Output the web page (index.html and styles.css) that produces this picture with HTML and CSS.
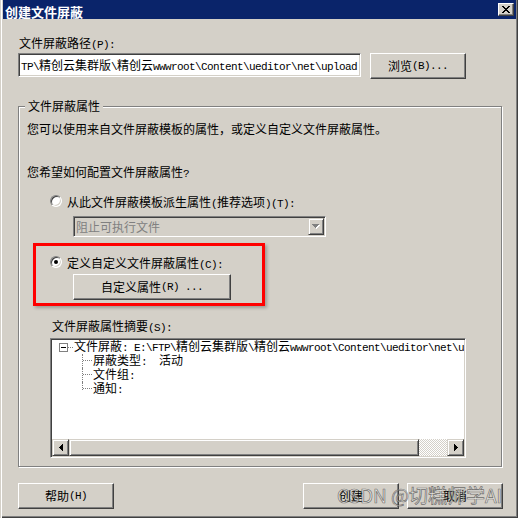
FILE: index.html
```html
<!DOCTYPE html>
<html lang="zh-CN">
<head>
<meta charset="utf-8">
<title>创建文件屏蔽</title>
<link rel="stylesheet" href="styles.css">
</head>
<body>
<div class="window">
  <div class="titlebar">
    <span class="title">创建文件屏蔽</span>
    <span class="close-btn">
      <svg width="8" height="7" viewBox="0 0 8 7" shape-rendering="crispEdges" fill="#000">
        <rect x="0" y="0" width="2" height="1"/><rect x="6" y="0" width="2" height="1"/>
        <rect x="1" y="1" width="2" height="1"/><rect x="5" y="1" width="2" height="1"/>
        <rect x="2" y="2" width="4" height="1"/>
        <rect x="3" y="3" width="2" height="1"/>
        <rect x="2" y="4" width="4" height="1"/>
        <rect x="1" y="5" width="2" height="1"/><rect x="5" y="5" width="2" height="1"/>
        <rect x="0" y="6" width="2" height="1"/><rect x="6" y="6" width="2" height="1"/>
      </svg>
    </span>
  </div>
  <div class="content">
    <div class="line path-label">文件屏蔽路径<span class="m">(P):</span></div>
    <div class="path-row">
      <div class="textbox"><span class="m">TP\</span>精创云集群版<span class="m">\</span>精创云<span class="m">wwwroot\Content\ueditor\net\upload</span></div>
      <div class="btn browse">浏览<span class="m">(B)...</span></div>
    </div>
    <div class="group">
      <span class="legend">文件屏蔽属性</span>
      <p class="line">您可以使用来自文件屏蔽模板的属性，或定义自定义文件屏蔽属性。</p>
      <p class="line question">您希望如何配置文件屏蔽属性<span class="m">?</span></p>
      <div class="radio-row opt1"><span class="radio"></span><span>从此文件屏蔽模板派生属性<span class="m">(</span>推荐选项<span class="m">)(T):</span></span></div>
      <div class="combo">
        <span class="combo-text">阻止可执行文件</span>
        <span class="combo-btn">
          <svg width="8" height="5" viewBox="0 0 8 5" shape-rendering="crispEdges">
            <path transform="translate(1 1)" d="M0 0h7v1h-1v1h-1v1h-1v1h-1v-1h-1v-1h-1v-1h-1z" fill="#fff"/>
            <path d="M0 0h7v1h-1v1h-1v1h-1v1h-1v-1h-1v-1h-1v-1h-1z" fill="#808080"/>
          </svg>
        </span>
      </div>
      <div class="highlight">
        <div class="radio-row"><span class="radio checked"></span><span>定义自定义文件屏蔽属性<span class="m">(C):</span></span></div>
        <div class="btn custom">自定义属性<span class="m">(R) ...</span></div>
      </div>
      <div class="line summary-label">文件屏蔽属性摘要<span class="m">(S):</span></div>
      <div class="tree">
        <div class="tree-body">
          <div class="tree-row root">
            <span class="expander"></span><span class="hdots"></span>
            <span class="tree-text">文件屏蔽<span class="m">: E:\FTP\</span>精创云集群版<span class="m">\</span>精创云<span class="m">wwwroot\Content\ueditor\net\upload</span></span>
          </div>
          <div class="tree-row child"><span class="conn"></span><span class="tree-text">屏蔽类型<span class="m">:  </span>活动</span></div>
          <div class="tree-row child"><span class="conn"></span><span class="tree-text">文件组<span class="m">:</span></span></div>
          <div class="tree-row child last"><span class="conn"></span><span class="tree-text">通知<span class="m">:</span></span></div>
        </div>
        <div class="hscroll">
          <span class="sb-btn">
            <svg width="4" height="7" viewBox="0 0 4 7" shape-rendering="crispEdges"><path d="M3 0h1v7h-1v-1h-1v-1h-1v-1h-1v-1h1v-1h1v-1h1z" fill="#000"/></svg>
          </span>
          <span class="sb-thumb"></span>
          <span class="sb-track"></span>
          <span class="sb-btn">
            <svg width="4" height="7" viewBox="0 0 4 7" shape-rendering="crispEdges"><path d="M0 0h1v1h1v1h1v1h1v1h-1v1h-1v1h-1v1h-1z" fill="#000"/></svg>
          </span>
        </div>
      </div>
    </div>
    <div class="footer">
      <div class="btn">帮助<span class="m">(H)</span></div>
      <div class="btn create">创建</div>
      <div class="btn cancel">取消</div>
    </div>
  </div>
  <div class="watermark">CSDN @切糕师学AI</div>
</div>
</body>
</html>
```

FILE: styles.css
```css
* { box-sizing: border-box; }
html, body { margin: 0; padding: 0; }
body {
  width: 518px;
  height: 518px;
  overflow: hidden;
  background: #d4d0c8;
  font-family: "Noto Sans CJK SC", "Noto Sans", sans-serif;
  font-size: 12px;
  color: #000;
}
.m {
  font-family: "Liberation Mono", "DejaVu Sans Mono", monospace;
  font-size: 11px;
  letter-spacing: -0.6px;
  white-space: pre;
}
.window {
  position: relative;
  width: 518px;
  height: 518px;
  background: #d4d0c8;
  padding: 0 2px 2px 3px;
  box-shadow: inset 1px 0 0 #d4d0c8, inset 2px 0 0 #fff,
              inset -1px -1px 0 #404040, inset -2px -2px 0 #808080;
}
.titlebar {
  height: 19px;
  background: #0a246a;
  display: flex;
  justify-content: space-between;
  align-items: flex-start;
  padding: 0 2px;
}
.title {
  color: #fff;
  font-weight: 700;
  font-size: 13px;
  line-height: 19px;
  padding-top: 2px;
}
.close-btn {
  margin-top: 3px;
  width: 16px;
  height: 13px;
  display: flex;
  align-items: center;
  justify-content: center;
  background: #d4d0c8;
  border: 1px solid;
  border-color: #fff #404040 #404040 #fff;
  box-shadow: inset -1px -1px 0 #808080;
}
.close-btn svg { display: block; }
.content { padding: 17px 14px 0 15px; }
.line { margin: 0; height: 14px; line-height: 14px; white-space: nowrap; }
.path-label { margin-left: 1px; }
.path-row { display: flex; align-items: flex-start; margin-top: 3px; }
.textbox {
  width: 343px;
  height: 24px;
  background: #fff;
  border: 1px solid;
  border-color: #808080 #fff #fff #808080;
  box-shadow: inset 1px 1px 0 #404040, inset -1px -1px 0 #d4d0c8;
  padding: 0 1px 0 2px;
  line-height: 21px;
  white-space: nowrap;
  overflow: hidden;
}
.btn {
  display: flex;
  align-items: center;
  justify-content: center;
  height: 26px;
  width: 96px;
  background: #d4d0c8;
  border: 1px solid;
  border-color: #fff #404040 #404040 #fff;
  box-shadow: inset -1px -1px 0 #808080;
  white-space: nowrap;
  line-height: 14px;
}
.browse { margin-left: 9px; }
.group {
  position: relative;
  margin-top: 27px;
  border: 1px solid #808080;
  box-shadow: inset 1px 1px 0 #fff, 1px 1px 0 #fff;
  padding: 15px 0 8px 8px;
}
.legend {
  position: absolute;
  top: -8px;
  left: 6px;
  padding: 0 3px;
  background: #d4d0c8;
  line-height: 14px;
}
.question { margin-top: 29px; }
.radio-row {
  display: flex;
  align-items: center;
  height: 14px;
  gap: 5px;
  white-space: nowrap;
}
.opt1 { margin-top: 15px; margin-left: 23px; }
.radio {
  position: relative;
  flex: none;
  width: 12px;
  height: 12px;
  border-radius: 50%;
  background: #fff;
  border: 1px solid;
  border-color: #808080 #fff #fff #808080;
  box-shadow: inset 1px 1px 0 #404040, inset -1px -1px 0 #d4d0c8;
}
.radio.checked::after {
  content: "";
  position: absolute;
  left: 3px;
  top: 3px;
  width: 4px;
  height: 4px;
  border-radius: 50%;
  background: #000;
}
.combo {
  margin-top: 8px;
  margin-left: 46px;
  width: 253px;
  height: 21px;
  display: flex;
  border: 1px solid;
  border-color: #808080 #fff #fff #808080;
  box-shadow: inset 1px 1px 0 #404040, inset -1px -1px 0 #d4d0c8;
  padding: 1px;
  background: #d4d0c8;
}
.combo-text {
  flex: 1;
  color: #808080;
  line-height: 17px;
  padding-left: 1px;
}
.combo-btn {
  width: 16px;
  height: 17px;
  display: flex;
  align-items: center;
  justify-content: center;
  border: 1px solid;
  border-color: #d4d0c8 #404040 #404040 #d4d0c8;
  box-shadow: inset 1px 1px 0 #fff, inset -1px -1px 0 #808080;
}
.combo-btn svg, .sb-btn svg { display: block; }
.highlight {
  margin-top: 6px;
  margin-left: 6px;
  width: 232px;
  border: 3px solid #ff0000;
  padding: 9px 0 3px 14px;
  box-shadow: 2px 2px 3px rgba(0, 0, 0, 0.25);
}
.custom { margin-top: 5px; margin-left: 23px; width: 158px; }
.summary-label { margin-top: 13px; margin-left: 25px; }
.tree {
  margin-top: 5px;
  margin-left: 23px;
  width: 416px;
  height: 120px;
  background: #fff;
  border: 1px solid;
  border-color: #808080 #fff #fff #808080;
  box-shadow: inset 1px 1px 0 #404040, inset -1px -1px 0 #d4d0c8;
  padding: 1px;
  display: flex;
  flex-direction: column;
}
.tree-body { flex: 1; overflow: hidden; }
.tree-row {
  height: 14px;
  display: flex;
  align-items: center;
  white-space: nowrap;
  line-height: 14px;
}
.root { padding-left: 7px; }
.expander {
  position: relative;
  flex: none;
  width: 9px;
  height: 9px;
  border: 1px solid #808080;
  background: #fff;
}
.expander::after {
  content: "";
  position: absolute;
  left: 1px;
  top: 3px;
  width: 5px;
  height: 1px;
  background: #000;
}
.hdots {
  flex: none;
  width: 5px;
  height: 0;
  border-top: 1px dotted #808080;
  margin-right: 1px;
}
.child { padding-left: 30px; }
.conn {
  position: relative;
  flex: none;
  align-self: flex-start;
  width: 10px;
  height: 14px;
  border-left: 1px dotted #808080;
}
.last .conn { height: 8px; }
.conn::after {
  content: "";
  position: absolute;
  left: 0;
  top: 6px;
  width: 9px;
  border-top: 1px dotted #808080;
}
.child .tree-text { margin-left: 1px; }
.hscroll { height: 17px; display: flex; flex: none; }
.sb-btn, .sb-thumb {
  height: 17px;
  background: #d4d0c8;
  border: 1px solid;
  border-color: #d4d0c8 #404040 #404040 #d4d0c8;
  box-shadow: inset 1px 1px 0 #fff, inset -1px -1px 0 #808080;
}
.sb-btn {
  width: 17px;
  flex: none;
  display: flex;
  align-items: center;
  justify-content: center;
}
.sb-thumb { width: 350px; flex: none; }
.sb-track {
  flex: 1;
  background: conic-gradient(#fff 25%, #d4d0c8 0 50%, #fff 0 75%, #d4d0c8 0) 0 0 / 2px 2px;
}
.footer {
  margin-top: 16px;
  margin-right: -1px;
  display: flex;
}
.create { margin-left: auto; }
.cancel { margin-left: 8px; }
.watermark {
  position: absolute;
  left: 337px;
  top: 485px;
  font-family: "Noto Sans CJK SC", "Noto Sans", sans-serif;
  font-size: 19px;
  line-height: 19px;
  white-space: nowrap;
  color: rgba(255, 255, 255, 0.5);
  -webkit-text-stroke: 0.7px rgba(60, 60, 60, 0.7);
}
```
